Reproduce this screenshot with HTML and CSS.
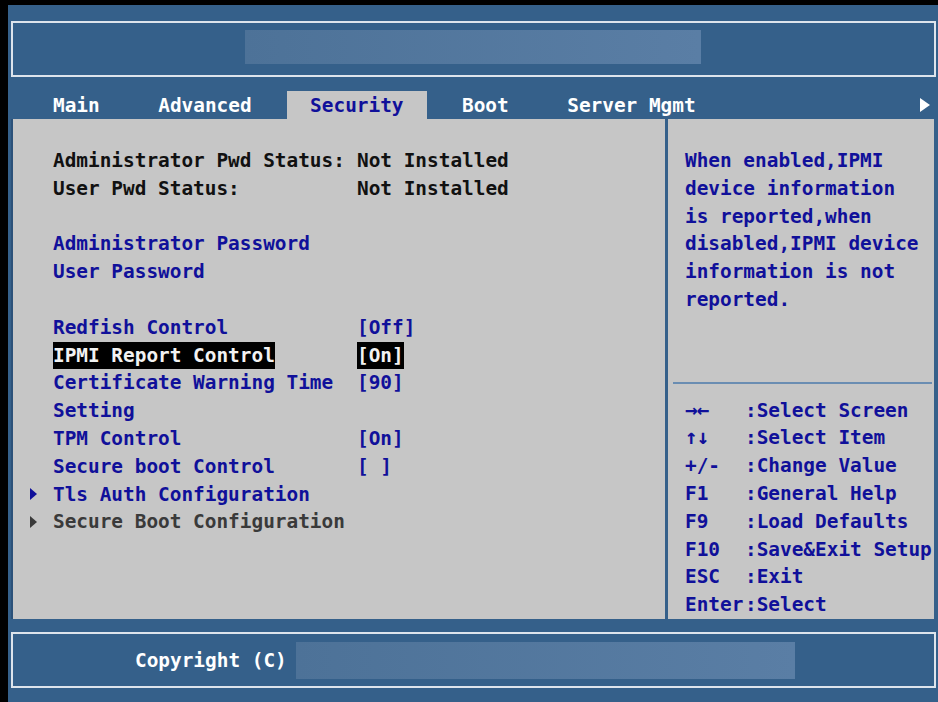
FILE: index.html
```html
<!DOCTYPE html>
<html lang="en">
<head>
<meta charset="utf-8">
<title>Setup Utility</title>
<link rel="stylesheet" href="styles.css">
</head>
<body>
<div class="screen">
  <header class="title-box">
    <div class="title-text"></div>
  </header>

  <nav class="tabs">
    <span class="tab">Main</span>
    <span class="tab">Advanced</span>
    <span class="tab active">Security</span>
    <span class="tab">Boot</span>
    <span class="tab">Server Mgmt</span>
    <span class="tab-more"></span>
  </nav>

  <main class="panels">
    <section class="menu">
      <div class="row info"><span class="gutter"></span><span class="label">Administrator Pwd Status:</span><span class="value">Not Installed</span></div>
      <div class="row info"><span class="gutter"></span><span class="label">User Pwd Status:</span><span class="value">Not Installed</span></div>
      <div class="row blank"></div>
      <div class="row"><span class="gutter"></span><span class="label">Administrator Password</span><span class="value"></span></div>
      <div class="row"><span class="gutter"></span><span class="label">User Password</span><span class="value"></span></div>
      <div class="row blank"></div>
      <div class="row"><span class="gutter"></span><span class="label">Redfish Control</span><span class="value">[Off]</span></div>
      <div class="row selected"><span class="gutter"></span><span class="label"><span class="hl">IPMI Report Control</span></span><span class="value"><span class="hl">[On]</span></span></div>
      <div class="row"><span class="gutter"></span><span class="label">Certificate Warning Time</span><span class="value">[90]</span></div>
      <div class="row"><span class="gutter"></span><span class="label">Setting</span><span class="value"></span></div>
      <div class="row"><span class="gutter"></span><span class="label">TPM Control</span><span class="value">[On]</span></div>
      <div class="row"><span class="gutter"></span><span class="label">Secure boot Control</span><span class="value">[ ]</span></div>
      <div class="row"><span class="gutter"><span class="submenu"></span></span><span class="label">Tls Auth Configuration</span><span class="value"></span></div>
      <div class="row disabled"><span class="gutter"><span class="submenu"></span></span><span class="label">Secure Boot Configuration</span><span class="value"></span></div>
    </section>

    <aside class="side">
      <div class="help">
        <div class="help-line">When enabled,IPMI</div>
        <div class="help-line">device information</div>
        <div class="help-line">is reported,when</div>
        <div class="help-line">disabled,IPMI device</div>
        <div class="help-line">information is not</div>
        <div class="help-line">reported.</div>
      </div>
      <div class="rule"></div>
      <dl class="keys">
        <dt><span class="arrows">→←</span></dt><dd>:Select Screen</dd>
        <dt><span class="arrows">↑↓</span></dt><dd>:Select Item</dd>
        <dt>+/-</dt><dd>:Change Value</dd>
        <dt>F1</dt><dd>:General Help</dd>
        <dt>F9</dt><dd>:Load Defaults</dd>
        <dt>F10</dt><dd>:Save&amp;Exit Setup</dd>
        <dt>ESC</dt><dd>:Exit</dd>
        <dt>Enter</dt><dd>:Select</dd>
      </dl>
    </aside>
  </main>

  <footer class="footer-box">
    <span class="copyright">Copyright (C)</span>
    <span class="footer-text"></span>
  </footer>
</div>
</body>
</html>
```

FILE: styles.css
```css
html, body {
  margin: 0;
  padding: 0;
  background: #000;
}

body {
  width: 938px;
  height: 702px;
  overflow: hidden;
  font-family: "DejaVu Sans Mono", "Liberation Mono", monospace;
  font-size: 19.4px;
  font-weight: bold;
}

.screen {
  margin: 5px 0 0 8px;
  width: 930px;
  height: 697px;
  background: #35608a;
  display: flex;
  flex-direction: column;
}

/* framed title strip */
.title-box {
  margin: 16px 2px 0 3px;
  height: 52px;
  border: 2px solid #dde4ec;
  display: flex;
  align-items: flex-start;
}

.title-text {
  margin: 7px 0 0 232px;
  width: 456px;
  height: 34px;
  background: linear-gradient(90deg, #4d7298, #5a7ea5);
}

/* top menu tabs */
.tabs {
  margin-top: 14px;
  height: 28px;
  display: flex;
  align-items: stretch;
  gap: 12.5px;
  padding-left: 22px;
  padding-right: 8px;
  color: #fff;
  line-height: 29px;
}

.tab {
  padding: 0 23px;
  white-space: pre;
}

.tab.active {
  background: #c6c6c6;
  color: #10109a;
}

.tab-more {
  margin-left: auto;
  align-self: center;
  width: 0;
  height: 0;
  border-top: 7px solid transparent;
  border-bottom: 7px solid transparent;
  border-left: 10px solid #fff;
}

/* two content panes */
.panels {
  height: 500px;
  display: flex;
  gap: 3px;
  margin-left: 3px;
  margin-right: 4px;
}

.menu {
  flex: 0 0 654px;
  background: #c6c6c6;
  border-left: 2px solid #2b5179;
  padding: 28px 0 0 17px;
  box-sizing: border-box;
  color: #10109a;
  line-height: 27.8px;
}

.row {
  display: grid;
  grid-template-columns: 23px 304px auto;
  height: 27.8px;
  white-space: pre;
}

.row.info {
  color: #111;
}

.row.disabled {
  color: #3a3a3a;
}

.gutter {
  display: flex;
  align-items: center;
}

.submenu {
  width: 0;
  height: 0;
  border-top: 6px solid transparent;
  border-bottom: 6px solid transparent;
  border-left: 7px solid currentColor;
}

.hl {
  display: inline-block;
  background: #000;
  color: #f2f2f2;
  height: 27px;
  line-height: 27px;
}

.side {
  flex: 1;
  background: #c6c6c6;
  color: #10109a;
  display: flex;
  flex-direction: column;
  line-height: 27.8px;
}

.help {
  flex: 1;
  padding: 28px 0 0 17px;
}

.help-line {
  height: 27.8px;
  white-space: nowrap;
}

.rule {
  height: 2px;
  margin: 0 2px 0 5px;
  background: #6a8db2;
}

.keys {
  margin: 13px 0 0 17px;
  display: grid;
  grid-template-columns: 60px auto;
}

.keys dt, .keys dd {
  margin: 0;
  height: 27.8px;
  white-space: nowrap;
}

.arrows {
  font-size: 21px;
  letter-spacing: -1px;
}

/* framed footer strip */
.footer-box {
  margin: 13px 2px 0 3px;
  height: 52px;
  border: 2px solid #dde4ec;
  display: flex;
  align-items: center;
  color: #fff;
}

.copyright {
  margin-left: 122px;
  white-space: pre;
}

.footer-text {
  margin-left: 9px;
  width: 499px;
  height: 37px;
  background: linear-gradient(90deg, #4d7298, #5a7ea5);
}
```
